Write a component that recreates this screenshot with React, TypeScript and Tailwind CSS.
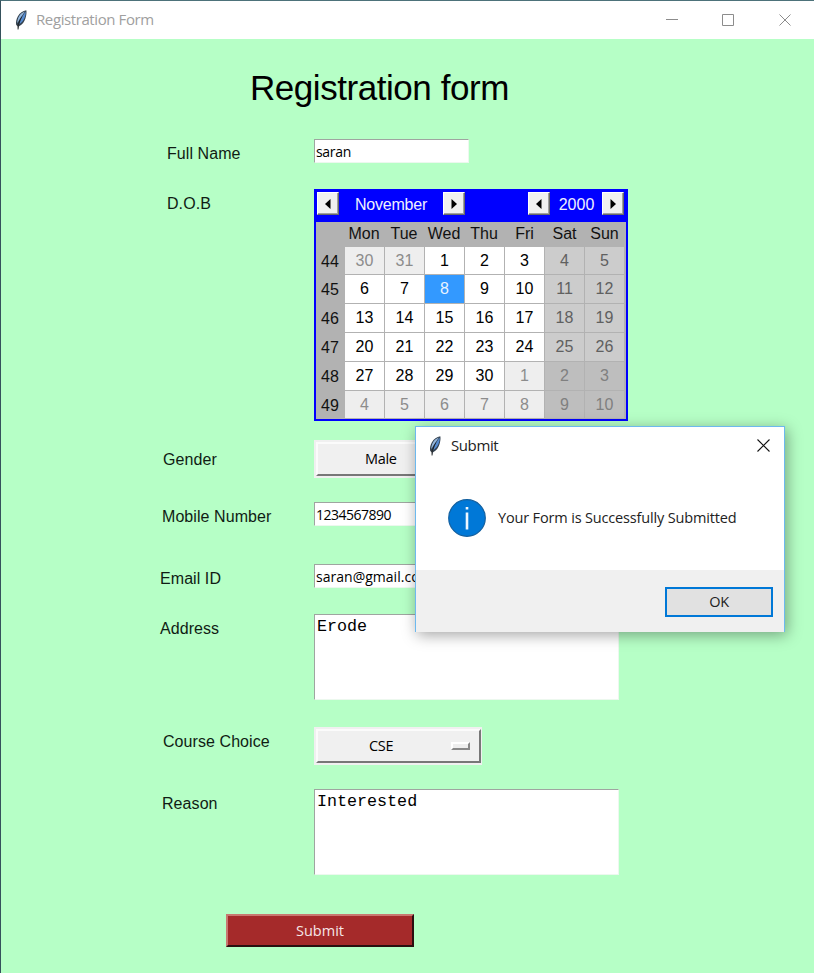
import type { ReactNode } from "react";

const ARIAL = "font-['Liberation_Sans',Arial,sans-serif]";
const SEGOE = "font-['Open_Sans','Segoe_UI',sans-serif]";

function Feather() {
  return (
    <svg width="12" height="20" viewBox="0 0 12 20">
      <path d="M11.300.3C8 1 4.600 3.200 2.900 6.300 1.200 9 .7 12.500 1.200 15l1.600 1.200.3 3.300 1-3.200C7.500 14.600 9.400 11.500 10.400 8.500 11.400 5.500 11.800 2.500 11.300.3Z" fill="#33404d" />
      <path d="M9.900 1.500C7.100 2.500 5 4.300 3.800 6.800 2.700 9 2.300 11 2.200 13.200L5.500 8Z" fill="#93b6dc" />
      <path d="M10.600 1.600 6.600 7.500 4.300 14.300C7 12.500 8.700 10 9.500 8 10.400 5.800 10.900 4 10.600 1.600Z" fill="#558bd0" />
      <path d="M7 6.500 5 10 3 16" stroke="#141a22" strokeWidth=".8" fill="none" />
      <path d="M3 14v5.500" stroke="#333" strokeWidth=".9" />
    </svg>
  );
}

function Row({ label, pl, h, labelTop, children }: { label: string; pl: string; h: string; labelTop: string; children: ReactNode }) {
  return (
    <div className={`flex items-start ${h}`}>
      <div className={`w-[313px] shrink-0 whitespace-nowrap ${ARIAL} text-[16px] leading-[20px] tracking-[0.07px] text-[#101c14] ${pl} ${labelTop}`}>{label}</div>
      {children}
    </div>
  );
}

function Entry({ value, spacing }: { value: string; spacing: string }) {
  return (
    <div className={`h-[24px] w-[155px] border border-t-[#9fa5a0] border-l-[#9fa5a0] border-r-[#ecf8ee] border-b-[#ecf8ee] bg-white pl-px text-[14px] leading-[23px] whitespace-nowrap text-black ${SEGOE} ${spacing}`}>
      {value}
    </div>
  );
}

function Area({ value }: { value: string }) {
  return (
    <div className="h-[86px] w-[305px] border border-t-[#9fa5a0] border-l-[#9fa5a0] border-r-[#ecf8ee] border-b-[#ecf8ee] bg-white pt-px pl-[2px] font-['Liberation_Mono','Courier_New',monospace] text-[16.7px] leading-[22px] text-black">
      {value}
    </div>
  );
}

function Option({ value, pad }: { value: string; pad: string }) {
  return (
    <div className="h-[38px] w-[168px] bg-[#f0f0f0] p-[2px]">
      <div className={`flex h-[34px] w-[165px] items-center border-2 border-t-[#fbfbfb] border-l-[#fbfbfb] border-r-[#777] border-b-[#777] ${pad} ${SEGOE} text-[14.5px] tracking-[-0.3px] text-black`}>
        <span>{value}</span>
        <span className="mr-[9px] ml-auto h-[8px] w-[19px] border-t-2 border-r-2 border-b-2 border-l-2 border-t-white border-r-[#888] border-b-[#888] border-l-white bg-[#eee]" />
      </div>
    </div>
  );
}

function Arrow({ right = false }: { right?: boolean }) {
  return (
    <div className="flex h-[23px] w-[22px] shrink-0 items-center justify-center border border-t-white border-l-white border-r-[#696969] border-b-[#696969] bg-[#f0f0f0] pr-px shadow-[inset_-1px_-1px_#a0a0a0]">
      <svg width="6" height="10" viewBox="0 0 6 10">
        <path d={right ? "M.5 0v10L6 5Z" : "M5.500 0v10L0 5Z"} fill="#000" />
      </svg>
    </div>
  );
}

const days = ["Mon", "Tue", "Wed", "Thu", "Fri", "Sat", "Sun"];
const weeks = [
  { n: 44, d: [30, 31, 1, 2, 3, 4, 5] },
  { n: 45, d: [6, 7, 8, 9, 10, 11, 12] },
  { n: 46, d: [13, 14, 15, 16, 17, 18, 19] },
  { n: 47, d: [20, 21, 22, 23, 24, 25, 26] },
  { n: 48, d: [27, 28, 29, 30, 1, 2, 3] },
  { n: 49, d: [4, 5, 6, 7, 8, 9, 10] },
];

function cellStyle(week: number, col: number, day: number) {
  const other = (week === 0 && day > 20) || (week >= 4 && day < 20);
  if (week === 1 && day === 8) return "bg-[#3399ff] text-[#e8f3ff]";
  if (col > 4) return other ? "bg-[#bebebe] text-[#808080]" : "bg-[#cccccc] text-[#606060]";
  return other ? "bg-[#eeeeee] text-[#8c8c8c]" : "bg-white text-black";
}

function Calendar() {
  return (
    <div className={`h-[232px] w-[314px] bg-[#0000ff] ${ARIAL} text-[16px] leading-[20px]`}>
      <div className="flex h-[33px] items-start pt-[3px] pr-[4px] pl-[3px] text-[#f0f0ff]">
        <Arrow />
        <div className="w-[104px] pt-[3px] text-center tracking-[-0.2px]">November</div>
        <Arrow right />
        <div className="flex-1" />
        <Arrow />
        <div className="w-[52px] pt-[3px] pl-px text-center">2000</div>
        <Arrow right />
      </div>
      <div className="mx-[2px] h-[197px] bg-[#b2b2b2]">
        <div className="flex h-[25px] pl-[28px] text-[#111]">
          {days.map((d, i) => (
            <div key={d} className={`w-[40px] text-center leading-[24px] ${i > 3 ? "pl-px" : ""}`}>{d}</div>
          ))}
        </div>
        {weeks.map((w, i) => (
          <div key={w.n} className={`flex ${i === 0 || i === 5 ? "h-[28px]" : "h-[29px]"} gap-px pb-px`}>
            <div className="w-[28px] pt-[5px] text-center text-[#111]">{w.n}</div>
            {w.d.map((day, c) => (
              <div key={c} className={`flex w-[39px] items-center justify-center ${cellStyle(i, c, day)}`}>{day}</div>
            ))}
          </div>
        ))}
      </div>
    </div>
  );
}

function Dialog() {
  return (
    <div className={`absolute top-[425px] left-[414px] flex h-[206px] w-[370px] flex-col border border-b-0 border-t-[#6db9ee] border-r-[#6db9ee] border-l-[#6db9ee] bg-white shadow-[2px_3px_14px_rgba(0,0,0,0.36)] ${SEGOE}`}>
      <div className="flex h-[38px] items-center pl-[13px]">
        <Feather />
        <span className="ml-[10px] pb-[2px] text-[15px] leading-[20px] tracking-[-0.400px] text-[#222]">Submit</span>
        <svg className="mr-[14px] mb-[2px] ml-auto" width="13" height="13" viewBox="0 0 13 13">
          <path d="m.5.5 12 12m0-12-12 12" stroke="#111" strokeWidth="1.100" />
        </svg>
      </div>
      <div className="flex h-[105px] items-center pl-[32px]">
        <svg width="38" height="38" viewBox="0 0 38 38">
          <circle cx="19" cy="19" r="18.300" fill="#0078d7" stroke="#14609f" strokeWidth="1.200" />
          <path d="M17.700 8h2.600v2.600h-2.600zM17.700 13.500h2.600v17h-2.600z" fill="#eef7ff" />
        </svg>
        <span className="ml-[12px] text-[14.500px] leading-[20px] tracking-[-0.160px] whitespace-nowrap text-[#222]">Your Form is Successfully Submitted</span>
      </div>
      <div className="flex flex-1 justify-end bg-[#f0f0f0] pt-[17px] pr-[11px]">
        <div className="flex h-[30px] w-[108px] items-center justify-center border-2 border-[#0078d7] bg-[#e1e1e1] pb-px text-[14.500px] tracking-[-0.3px] text-[#222]">OK</div>
      </div>
    </div>
  );
}

export default function App() {
  return (
    <div className="relative flex h-[973px] w-[814px] flex-col overflow-hidden border-t border-l border-t-[#4d727a] border-l-[#35515c] bg-[#b6ffc6]">
      <div className={`flex h-[38px] shrink-0 items-center bg-white pb-px pl-[14px] ${SEGOE}`}>
        <Feather />
        <span className="ml-[9px] text-[15px] tracking-[-0.400px] text-[#a0a0a0]">Registration Form</span>
        <svg className="ml-auto" width="148" height="36" viewBox="0 0 148 36">
          <path d="M0 17.500h12M56.500 12.500h11v11h-11zM113.500 12.500l11 11m0-11-11 11" fill="none" stroke="#8c8c8c" />
        </svg>
      </div>
      <h1 className={`h-[100px] shrink-0 pt-[28px] pl-[249px] ${ARIAL} text-[35px] leading-[42px] tracking-[-0.450px] text-black`}>Registration form</h1>
      <Row label="Full Name" pl="pl-[166px]" h="h-[50px]" labelTop="pt-[5px]"><Entry value="saran" spacing="tracking-[-0.3px]" /></Row>
      <Row label="D.O.B" pl="pl-[166px]" h="h-[251px]" labelTop="pt-[5px]"><Calendar /></Row>
      <Row label="Gender" pl="pl-[162px]" h="h-[62px]" labelTop="pt-[10px]"><Option value="Male" pad="pl-[47px]" /></Row>
      <Row label="Mobile Number" pl="pl-[161px]" h="h-[62px]" labelTop="pt-[5px]"><Entry value="1234567890" spacing="tracking-[-0.5px]" /></Row>
      <Row label="Email ID" pl="pl-[159px]" h="h-[50px]" labelTop="pt-[5px]"><Entry value="saran@gmail.com" spacing="tracking-[0.02px]" /></Row>
      <Row label="Address" pl="pl-[159px]" h="h-[113px]" labelTop="pt-[5px]"><Area value="Erode" /></Row>
      <Row label="Course Choice" pl="pl-[162px]" h="h-[62px]" labelTop="pt-[5px]"><Option value="CSE" pad="pl-[51px]" /></Row>
      <Row label="Reason" pl="pl-[161px]" h="h-[125px]" labelTop="pt-[5px]"><Area value="Interested" /></Row>
      <button className={`ml-[225px] h-[33px] w-[188px] shrink-0 border-2 border-t-[#c87870] border-l-[#c87870] border-r-[#2b1010] border-b-[#2b1010] bg-[#a52a2a] ${SEGOE} text-[14.500px] leading-[20px] text-[#f5e6e6]`}>Submit</button>
      <Dialog />
    </div>
  );
}
